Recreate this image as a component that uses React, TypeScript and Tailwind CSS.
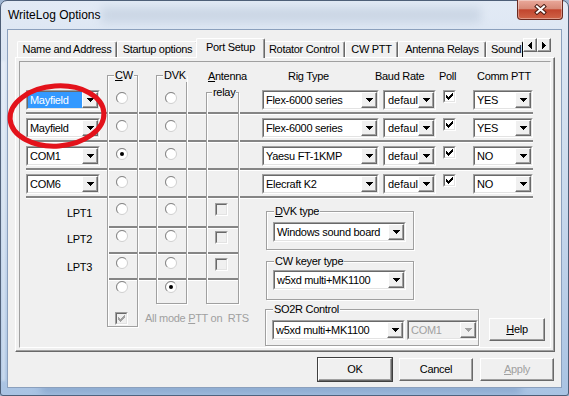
import React from 'react';

// classic win32 bits
const raised =
  'bg-[#f0f0f0] border border-t-white border-l-white border-r-[#696969] border-b-[#696969] shadow-[inset_-1px_-1px_0_#a0a0a0]';

const DownArrow = ({ color = '#000' }: { color?: string }) => (
  <svg width="7" height="4" viewBox="0 0 7 4" shapeRendering="crispEdges" className="block">
    <path d="M0 0h7v1H0zM1 1h5v1H1zM2 2h3v1H2zM3 3h1v1H3z" fill={color} />
  </svg>
);

const SideArrow = ({ dir }: { dir: 'left' | 'right' }) => (
  <svg width="4" height="7" viewBox="0 0 4 7" shapeRendering="crispEdges" className="block">
    {dir === 'left' ? (
      <path d="M3 0h1v7H3zM2 1h1v5H2zM1 2h1v3H1zM0 3h1v1H0z" fill="#000" />
    ) : (
      <path d="M0 0h1v7H0zM1 1h1v5H1zM2 2h1v3H2zM3 3h1v1H3z" fill="#000" />
    )}
  </svg>
);

const CheckMark = ({ color }: { color: string }) => (
  <svg width="7" height="7" viewBox="0 0 7 7" shapeRendering="crispEdges" className="block">
    <path
      d="M6 0h1v1H6zM5 1h2v1H5zM0 2h1v1H0zM4 2h3v1H4zM0 3h2v1H0zM3 3h3v1H3zM0 4h5v1H0zM1 5h3v1H1zM2 6h1v1H2z"
      fill={color}
    />
  </svg>
);

const Radio = ({ checked = false }: { checked?: boolean }) => (
  <svg width="12" height="12" viewBox="0 0 12 12" className="block">
    <circle cx="6" cy="6" r="5.5" fill="#fff" stroke="#cfcfcf" />
    <path d="M2.1 9.9A5.5 5.5 0 0 1 9.9 2.1" fill="none" stroke="#858585" />
    {checked && <circle cx="6" cy="6" r="2" fill="#000" />}
  </svg>
);

const CheckBox = ({ checked = false, face = 'bg-white', mark = '#000' }: any) => (
  <div className="w-[13px] h-[13px] shrink-0 border border-t-[#a0a0a0] border-l-[#a0a0a0] border-r-white border-b-white">
    <div
      className={`w-full h-full flex items-center justify-center border border-t-[#696969] border-l-[#696969] border-r-[#e3e3e3] border-b-[#e3e3e3] ${face}`}
    >
      {checked && <CheckMark color={mark} />}
    </div>
  </div>
);

const Combo = ({ text, className = '', selected = false, disabled = false, pad = 'pl-[2px]' }: any) => (
  <div className={`h-[20px] border border-t-[#a0a0a0] border-l-[#a0a0a0] border-r-white border-b-white ${className}`}>
    <div
      className={`flex h-full border border-t-[#696969] border-l-[#696969] border-r-[#e3e3e3] border-b-[#e3e3e3] ${
        disabled ? 'bg-[#f0f0f0]' : 'bg-white'
      }`}
    >
      <div
        className={`flex-1 min-w-0 overflow-hidden whitespace-nowrap ${pad} leading-[16px] ${
          selected ? 'bg-[#3399ff] text-white' : disabled ? 'text-[#a0a0a0]' : 'text-black'
        }`}
      >
        {text}
      </div>
      <div className={`w-[16px] h-[16px] shrink-0 flex items-center justify-center ${raised}`}>
        <DownArrow color={disabled ? '#a0a0a0' : '#000'} />
      </div>
    </div>
  </div>
);

const GroupBox = ({ label, labelLeft, className = '', children }: any) => (
  <div className={`relative border border-[#a0a0a0] shadow-[inset_1px_1px_0_#fff,1px_1px_0_#fff] ${className}`}>
    <span className={`absolute -top-[7px] ${labelLeft} bg-[#f0f0f0] px-[1px] leading-[13px] whitespace-nowrap`}>
      {label}
    </span>
    {children}
  </div>
);

const Tab = ({ label, w, active = false }: any) => (
  <div
    className={`${w} flex items-center justify-center whitespace-nowrap rounded-t-[2px] bg-[#f0f0f0] border border-b-0 border-l-white border-t-white border-r-[#696969] shadow-[inset_-1px_0_0_#a0a0a0] ${
      active ? 'h-[20px] -mx-[2px] -mb-[1px] relative z-10 pb-[2px]' : 'h-[16px]'
    }`}
  >
    {label}
  </div>
);

const WinButton = ({ children, w = 'w-[74px]', disabled = false, isDefault = false }: any) => (
  <div
    className={`${w} h-[23px] flex items-center justify-center ${raised} ${
      isDefault ? 'outline outline-1 outline-[#404040]' : ''
    } ${disabled ? 'text-[#a0a0a0]' : 'text-black'}`}
  >
    {children}
  </div>
);

const ports = [
  { port: 'Mayfield', sel: true, cw: false, rig: 'Flex-6000 series', comm: 'YES' },
  { port: 'Mayfield', sel: false, cw: false, rig: 'Flex-6000 series', comm: 'YES' },
  { port: 'COM1', sel: false, cw: true, rig: 'Yaesu FT-1KMP', comm: 'NO' },
  { port: 'COM6', sel: false, cw: false, rig: 'Elecraft K2', comm: 'NO' },
];
const rowCls = ['row-start-2', 'row-start-4', 'row-start-6', 'row-start-8'];
const sepCls = ['row-start-3', 'row-start-5', 'row-start-7', 'row-start-9'];

const lpts = [
  { label: 'LPT1', row: 'row-start-10', radioMt: 'mt-[3px]', boxMt: 'mt-[3px]', textMt: 'mt-[7px]' },
  { label: 'LPT2', row: 'row-start-12', radioMt: 'mt-[1px]', boxMt: 'mt-[2px]', textMt: 'mt-[4px]' },
  { label: 'LPT3', row: 'row-start-14', radioMt: 'mt-[2px]', boxMt: 'mt-[3px]', textMt: 'mt-[6px]' },
];
const lowSep = ['row-start-11', 'row-start-13', 'row-start-15'];

const PortGrid = () => (
  <div className="grid grid-cols-[6px_74px_7px_31px_18px_31px_19px_33px_23px_271px_17px] grid-rows-[26px_24px_4px_24px_4px_24px_4px_24px_4px_26px_3px_23px_3px_23px_3px_23px_23px_19px]">
    {/* column group boxes */}
    <GroupBox
      label={<><u>C</u>W</>}
      labelLeft="left-[6px]"
      className="col-start-4 col-end-5 row-start-1 row-end-18 mt-[13px]"
    />
    <GroupBox label="DVK" labelLeft="left-[6px]" className="col-start-6 col-end-7 row-start-1 row-end-17 mt-[13px]" />
    <GroupBox label="relay" labelLeft="left-[5px]" className="col-start-8 col-end-9 row-start-1 row-end-17 mt-[30px]" />
    <div className="col-start-8 col-end-11 row-start-1 mt-[8px] ml-[2px] leading-[13px] whitespace-nowrap">
      <u>A</u>ntenna
    </div>

    {/* headers */}
    <div className="col-start-10 col-end-12 row-start-1 flex pt-[8px] leading-[13px] whitespace-nowrap">
      <span className="w-[113px] pl-[26px]">Rig Type</span>
      <span className="w-[64px]">Baud Rate</span>
      <span className="w-[38px]">Poll</span>
      <span>Comm PTT</span>
    </div>

    {/* port rows */}
    {ports.map((p, i) => (
      <React.Fragment key={i}>
        <Combo text={p.port} selected={p.sel} className={`col-start-2 col-end-3 ${rowCls[i]} mt-[2px]`} />
        <div className={`col-start-4 col-end-5 ${rowCls[i]} ml-[9px] mt-[4px]`}>
          <Radio checked={p.cw} />
        </div>
        <div className={`col-start-6 col-end-7 ${rowCls[i]} ml-[9px] mt-[4px]`}>
          <Radio />
        </div>
        <div className={`col-start-10 col-end-11 ${rowCls[i]} mt-[2px] flex items-start`}>
          <Combo text={p.rig} className="w-[117px]" />
          <Combo text="default" pad="pl-[3px] tracking-normal" className="w-[53px] ml-[4px]" />
          <div className="ml-[7px]">
            <CheckBox checked />
          </div>
          <Combo text={p.comm} className="w-[60px] ml-[17px]" />
        </div>
        <div className={`col-start-2 col-end-11 ${sepCls[i]} h-[3px] border-t-2 border-[#858585] border-b border-b-white`} />
      </React.Fragment>
    ))}

    {/* LPT rows */}
    {lpts.map((l, i) => (
      <React.Fragment key={l.label}>
        <div className={`col-start-2 col-end-3 ${l.row} ${l.textMt} pl-[41px] leading-[13px]`}>{l.label}</div>
        <div className={`col-start-4 col-end-5 ${l.row} ${l.radioMt} ml-[9px]`}>
          <Radio />
        </div>
        <div className={`col-start-6 col-end-7 ${l.row} ${l.radioMt} ml-[9px]`}>
          <Radio />
        </div>
        <div className={`col-start-8 col-end-9 ${l.row} ${l.boxMt} ml-[9px]`}>
          <CheckBox face="bg-[#f0f0f0]" />
        </div>
        <div className={`col-start-4 col-end-9 ${lowSep[i]} h-[3px] border-t-2 border-[#858585] border-b border-b-white`} />
      </React.Fragment>
    ))}
    <div className="col-start-4 col-end-5 row-start-16 ml-[9px]">
      <Radio />
    </div>
    <div className="col-start-6 col-end-7 row-start-16 ml-[9px]">
      <Radio checked />
    </div>

    {/* disabled checkbox */}
    <div className="col-start-4 col-end-10 row-start-17 mt-[4px] ml-[6px] w-[140px] h-[17px] bg-[#f0f0f0]">
      <div className="flex items-center mt-[4px] h-[13px]">
        <div className="ml-[2px]">
          <CheckBox checked face="bg-[#f0f0f0]" mark="#a0a0a0" />
        </div>
        <span className="ml-[17px] text-[#a0a0a0] whitespace-nowrap leading-[13px]">
          All mode <u>P</u>TT on{'\u00a0'} RTS
        </span>
      </div>
    </div>

    {/* right lower block */}
    <div className="col-start-10 col-end-12 row-start-10 row-end-19 flex flex-col">
      <GroupBox
        label={<><u>D</u>VK type</>}
        labelLeft="left-[7px]"
        className="ml-[4px] mt-[11px] w-[148px] h-[39px] pl-[6px] pt-[10px]"
      >
        <Combo text="Windows sound board" className="w-[133px]" />
      </GroupBox>
      <GroupBox label="CW keyer type" labelLeft="left-[7px]" className="ml-[4px] mt-[11px] w-[148px] h-[39px] pl-[6px] pt-[8px]">
        <Combo text="w5xd multi+MK1100" className="w-[133px]" />
      </GroupBox>
      <div className="flex items-start ml-[3px] mt-[9px]">
        <GroupBox label="SO2R Control" labelLeft="left-[7px]" className="w-[214px] h-[37px] pl-[6px] pt-[10px] flex">
          <Combo text="w5xd multi+MK1100" className="w-[133px]" />
          <Combo text="COM1" disabled className="w-[71px] ml-[2px]" />
        </GroupBox>
        <div className="ml-[10px] mt-[9px]">
          <WinButton w="w-[56px]">
            <u>H</u>elp
          </WinButton>
        </div>
      </div>
    </div>
  </div>
);

export default function App() {
  return (
    <div className="relative w-[569px] h-[396px] overflow-hidden bg-[#9fb6d2] font-['Liberation_Sans',Arial,sans-serif] text-[11px] tracking-[-0.3px] text-black">
      <div className="relative flex flex-col w-full h-full border border-[#4d5e77] rounded-t-[7px] rounded-b-[3px] bg-gradient-to-b from-[#e2eaf5] via-[#c9d9ec] to-[#a9c3e3]">
        {/* glass smudges behind title */}
        <div className="absolute left-[100px] top-[6px] w-[380px] h-[16px] bg-[#8fa3bb] opacity-25 blur-[5px]" />
        <div className="absolute left-[40px] top-[384px] w-[480px] h-[8px] bg-[#5f83b2] opacity-50 blur-[4px]" />
        <div className="absolute left-[1px] top-[60px] w-[3px] h-[320px] bg-white opacity-40 blur-[1px]" />

        {/* title bar */}
        <div className="relative flex h-[28px] shrink-0 justify-between">
          <div className="pl-[7px] pt-[7px] text-[12px] leading-[14px] tracking-normal text-black">WriteLog Options</div>
          <div className="mr-[5px] -mt-[1px] w-[46px] h-[20px] flex items-center justify-center rounded-b-[4px] border border-t-0 border-[#6b2a20] bg-[linear-gradient(#eaa99b,#d88a78_45%,#c2452e_52%,#cf6448)] shadow-[inset_0_0_0_1px_rgba(255,255,255,0.35)]">
            <svg width="13" height="11" viewBox="0 0 13 11">
              <path d="M3 2.5L10 8.5M10 2.5L3 8.5" stroke="#4a1b12" strokeWidth="4" strokeLinecap="square" />
              <path d="M3 2.5L10 8.5M10 2.5L3 8.5" stroke="#fff" strokeWidth="2" strokeLinecap="square" />
            </svg>
          </div>
        </div>

        {/* client area */}
        <div className="relative mx-[6px] h-[359px] shrink-0 border border-[#8ba0bd] bg-[#f0f0f0] pt-[8px] pl-[7px]">
          {/* tab strip */}
          <div className="relative flex items-end h-[19px] w-[540px]">
            <div className="w-[2px]" />
            <Tab label="Name and Address" w="w-[100px]" />
            <Tab label="Startup options" w="w-[81px]" />
            <Tab label="Port Setup" w="w-[69px]" active />
            <Tab label="Rotator Control" w="w-[82px]" />
            <Tab label="CW PTT" w="w-[53px]" />
            <Tab label="Antenna Relays" w="w-[88px]" />
            <div className="w-[37px] h-[16px] overflow-hidden whitespace-nowrap pl-[4px] flex items-center bg-[#f0f0f0] border border-b-0 border-l-white border-t-white rounded-t-[2px]">
              Sound
            </div>
            <div className="absolute right-[4px] top-0 flex z-20">
              <div className={`w-[14px] h-[14px] flex items-center justify-center ${raised}`}>
                <SideArrow dir="left" />
              </div>
              <div className={`w-[14px] h-[14px] flex items-center justify-center ${raised}`}>
                <SideArrow dir="right" />
              </div>
            </div>
          </div>

          {/* tab panel */}
          <div className="w-[540px] h-[295px] p-[3px] border border-l-white border-t-white border-r-[#696969] border-b-[#696969] shadow-[inset_-1px_-1px_0_#a0a0a0]">
            <div className="w-[532px] h-[287px] border border-t-[#a0a0a0] border-l-[#a0a0a0] border-r-white border-b-white">
              <PortGrid />
            </div>
          </div>

          {/* dialog buttons */}
          <div className="flex justify-end gap-[7px] w-[540px] pr-[1px] mt-[6px]">
            <WinButton isDefault>OK</WinButton>
            <WinButton>Cancel</WinButton>
            <WinButton disabled>
              <u>A</u>pply
            </WinButton>
          </div>
        </div>
      </div>

      {/* red marker ellipse drawn on the screenshot */}
      <svg className="absolute left-[6px] top-[82px] pointer-events-none" width="102" height="68" viewBox="0 0 102 68">
        <ellipse cx="51" cy="34" rx="47" ry="30" fill="none" stroke="#e3121b" strokeWidth="5" transform="rotate(-4 51 34)" />
      </svg>
    </div>
  );
}
